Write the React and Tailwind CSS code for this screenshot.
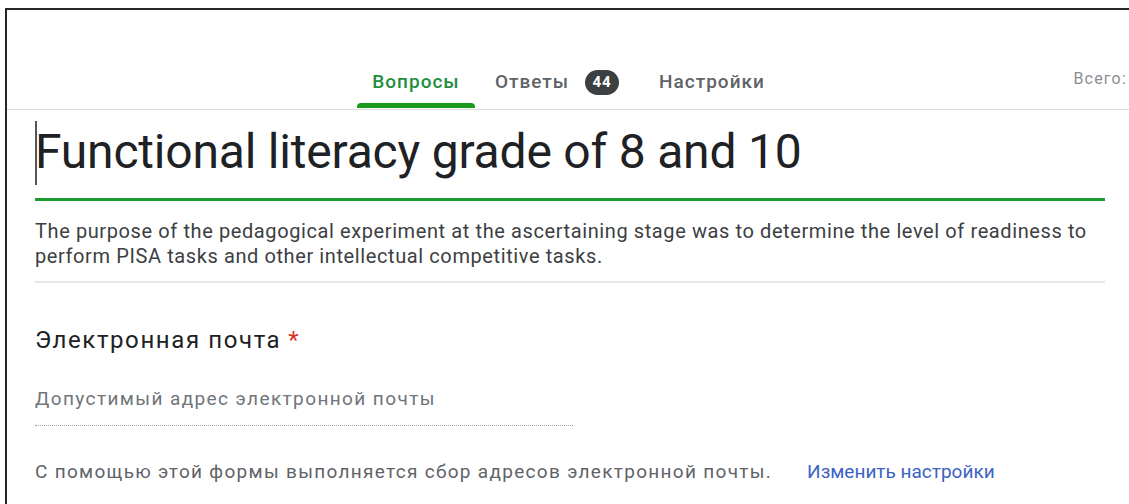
const tabs = [
  { label: "Вопросы", active: true, w: "w-[118px]" },
  { label: "Ответы", badge: 44, w: "w-[152px]" },
  { label: "Настройки", w: "w-[146px]" },
];

const App = () => {
  return (
    <div className="h-screen w-full bg-white pt-[8px] pl-[5px] overflow-hidden font-['Roboto',sans-serif]">
      <div className="h-full border-t-2 border-l-2 border-[#262626] flex flex-col">
        {/* top tab bar */}
        <div className="h-[100px] shrink-0 border-b border-[#d9d9d9] flex items-end relative">
          <div className="flex items-end ml-[350px] gap-[6px]">
            {tabs.map((t) => (
              <div key={t.label} className={"flex flex-col items-center " + t.w}>
                <div className="flex items-center h-[42px] gap-[16px]">
                  <span
                    className={
                      t.active
                        ? "text-[19px] text-[#1e8e3e] font-medium tracking-[1px]"
                        : "text-[19px] text-[#5f6368] font-medium tracking-[1px]"
                    }
                  >
                    {t.label}
                  </span>
                  {t.badge && (
                    <span className="w-[34px] h-[25px] rounded-full bg-[#3c4043] text-white text-[15px] font-bold tracking-[1px] flex items-center justify-center">
                      {t.badge}
                    </span>
                  )}
                </div>
                <div
                  className={
                    t.active
                      ? "h-[5px] w-full rounded-t bg-[#1a9a1a] mb-[1px]"
                      : "h-[5px] w-full mb-[1px]"
                  }
                />
              </div>
            ))}
          </div>
          <span className="absolute right-[2px] bottom-[18px] text-[16px] text-[#8a8e93] tracking-[1.2px]">
            Всего:
          </span>
        </div>

        {/* form header */}
        <div className="pl-[28px] pr-[24px]">
          <div className="relative pt-[14px] pb-[18px] border-b-[3px] border-[#1e9b2e]">
            <span className="absolute left-[0px] top-[11px] w-[2px] h-[64px] bg-[#555]" />
            <h1 className="text-[48px] leading-[56px] text-[#202124] font-normal tracking-[-0.2px]">
              Functional literacy grade of 8 and 10
            </h1>
          </div>
          <p className="pt-[18px] pb-[12px] text-[20px] leading-[25px] text-[#3c4043] tracking-[0.6px] border-b-2 border-[#e6e6e6]">
            The purpose of the pedagogical experiment at the ascertaining stage was to determine the level of readiness to perform PISA tasks and other intellectual competitive tasks.
          </p>

          {/* email field */}
          <div className="pt-[42px]">
            <div className="text-[24px] leading-[30px] text-[#202124] tracking-[1.6px]">
              Электронная почта<span className="ml-[7px] text-[#d93025]">*</span>
            </div>
            <div className="mt-[32px] w-[538px] pb-[14px] border-b border-dotted border-[#9aa0a6] text-[19px] leading-[24px] text-[#70757a] tracking-[1.4px]">
              Допустимый адрес электронной почты
            </div>
            <div className="mt-[34px] text-[19px] leading-[24px] text-[#5f6368] tracking-[1.3px]">
              С помощью этой формы выполняется сбор адресов электронной почты.
              <span className="ml-[35px] text-[#3b62c4] tracking-[0px]">Изменить настройки</span>
            </div>
          </div>
        </div>
      </div>
    </div>
  );
};

export default App;
